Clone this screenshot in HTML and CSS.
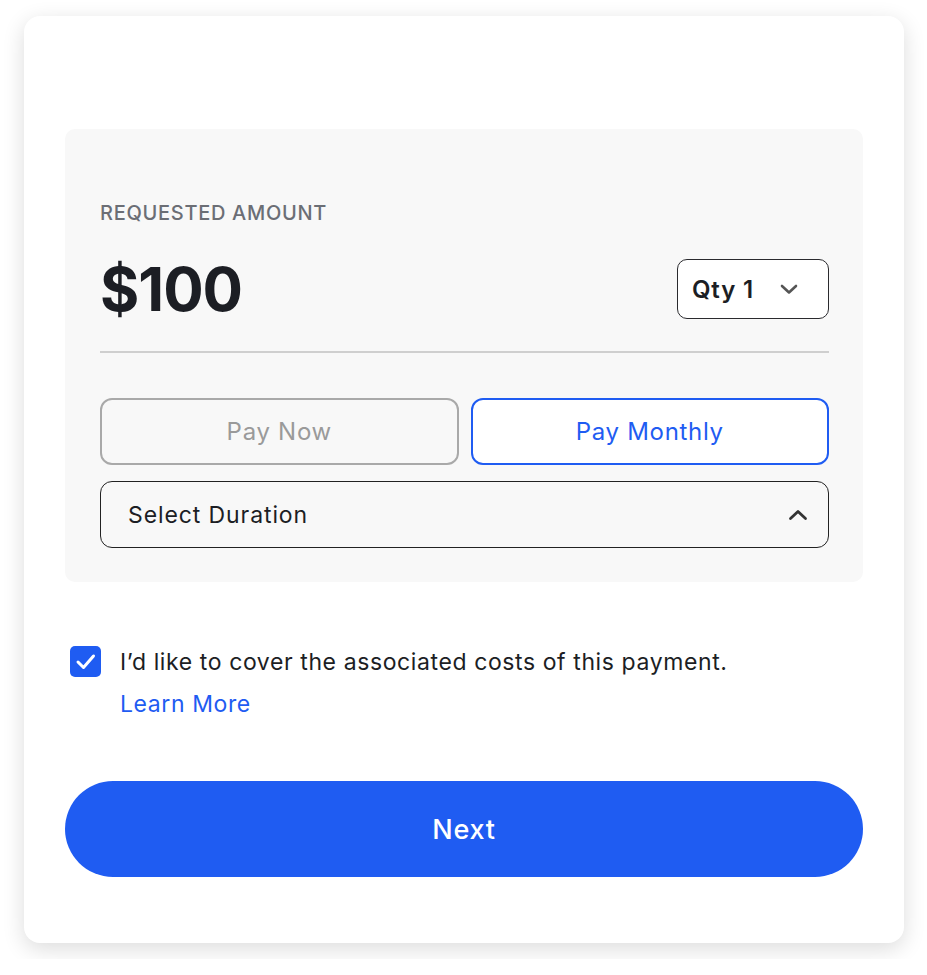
FILE: index.html
```html
<!DOCTYPE html>
<html lang="en">

<head>
    <meta charset="UTF-8">
    <meta name="viewport" content="width=device-width, initial-scale=1.0">
    <title>Payment Amount</title>
    <link rel="stylesheet" href="styles.css">
</head>

<body>
    <div class="card">
        <div class="amount_panel">
            <p class="label">REQUESTED AMOUNT</p>

            <div class="amount_row">
                <span class="amount">$100</span>
                <button class="qty">
                    <span>Qty 1</span>
                    <svg width="18" height="12" viewBox="0 0 18 12">
                        <path d="M2 3 L9 9.5 L16 3" fill="none" stroke="#555" stroke-width="2.6" stroke-linecap="round" stroke-linejoin="round" />
                    </svg>
                </button>
            </div>

            <div class="divider"></div>

            <div class="pay_options">
                <button class="option">Pay Now</button>
                <button class="option active">Pay Monthly</button>
            </div>

            <button class="duration">
                <span>Select Duration</span>
                <svg width="20" height="12" viewBox="0 0 20 12">
                    <path d="M2.5 9.5 L10 2.5 L17.5 9.5" fill="none" stroke="#333" stroke-width="2.8" stroke-linecap="round" stroke-linejoin="round" />
                </svg>
            </button>
        </div>

        <div class="cover_row">
            <span class="checkbox">
                <svg width="31" height="31" viewBox="0 0 31 31">
                    <path d="M8 16 L13.5 21.5 L23.5 10" fill="none" stroke="#fff" stroke-width="3" stroke-linecap="round" stroke-linejoin="round" />
                </svg>
            </span>
            <div class="cover_text">
                I’d like to cover the associated costs of this payment.<br>
                <a href="#">Learn More</a>
            </div>
        </div>

        <button class="next">Next</button>
    </div>
</body>

</html>
```

FILE: styles.css
```css
* {
    margin: 0;
    padding: 0;
    box-sizing: border-box;
}

body {
    background-color: #fff;
    font-family: Inter, "Noto Sans", sans-serif;
    color: #1c1e24;
    padding: 16px 24px;
}

.card {
    width: 880px;
    height: 927px;
    background-color: #fff;
    border-radius: 16px;
    box-shadow: 0 6px 22px rgba(0, 0, 0, 0.14);
    padding: 113px 41px 0 41px;
}

.amount_panel {
    background-color: #f8f8f8;
    border-radius: 10px;
    padding: 74px 34px 34px 35px;
}

.label {
    font-size: 20px;
    line-height: 20px;
    font-weight: 500;
    letter-spacing: 0.7px;
    color: #6b6e75;
}

.amount_row {
    display: flex;
    justify-content: space-between;
    align-items: center;
    height: 60px;
    margin-top: 36px;
}

.amount {
    font-size: 60px;
    line-height: 60px;
    font-weight: 700;
    letter-spacing: -1px;
    color: #1c1e24;
}

button {
    font-family: inherit;
    background: none;
    cursor: pointer;
}

.qty {
    width: 152px;
    height: 60px;
    border: 1.5px solid #2a2a2e;
    border-radius: 10px;
    background-color: #fff;
    display: flex;
    align-items: center;
    justify-content: space-between;
    padding: 0 30px 0 14px;
    font-size: 24px;
    font-weight: 600;
    letter-spacing: 0.8px;
    color: #1c1e24;
}

.divider {
    height: 2px;
    background-color: #cfcfcf;
    margin-top: 32px;
}

.pay_options {
    display: flex;
    gap: 12px;
    margin-top: 45px;
}

.option {
    flex: 1;
    height: 67px;
    border: 2px solid #a9a9a9;
    border-radius: 12px;
    font-size: 24px;
    font-weight: 400;
    letter-spacing: 0.7px;
    color: #9a9a9a;
    background-color: #f8f8f8;
}

.option.active {
    border-color: #1f5cf2;
    color: #1f5cf2;
    background-color: #fff;
}

.duration {
    width: 100%;
    height: 67px;
    margin-top: 16px;
    border: 1.5px solid #222;
    border-radius: 12px;
    display: flex;
    align-items: center;
    justify-content: space-between;
    padding: 0 20px 0 27px;
    font-size: 23px;
    font-weight: 400;
    letter-spacing: 0.9px;
    color: #1c1e24;
}

.cover_row {
    display: flex;
    align-items: flex-start;
    gap: 19px;
    margin-top: 59px;
    padding-left: 5px;
}

.checkbox {
    width: 31px;
    height: 31px;
    flex-shrink: 0;
    border-radius: 5px;
    background-color: #1f5cf2;
    margin-top: 5px;
}

.checkbox svg {
    display: block;
}

.cover_text {
    font-size: 23px;
    line-height: 42px;
    letter-spacing: 0.6px;
    color: #1c1e24;
}

.cover_text a {
    color: #1f5cf2;
    text-decoration: none;
}

.next {
    width: 100%;
    height: 96px;
    margin-top: 56px;
    border: none;
    border-radius: 48px;
    background-color: #1f5cf2;
    color: #fff;
    font-size: 27px;
    font-weight: 500;
    letter-spacing: 0.8px;
}
```
